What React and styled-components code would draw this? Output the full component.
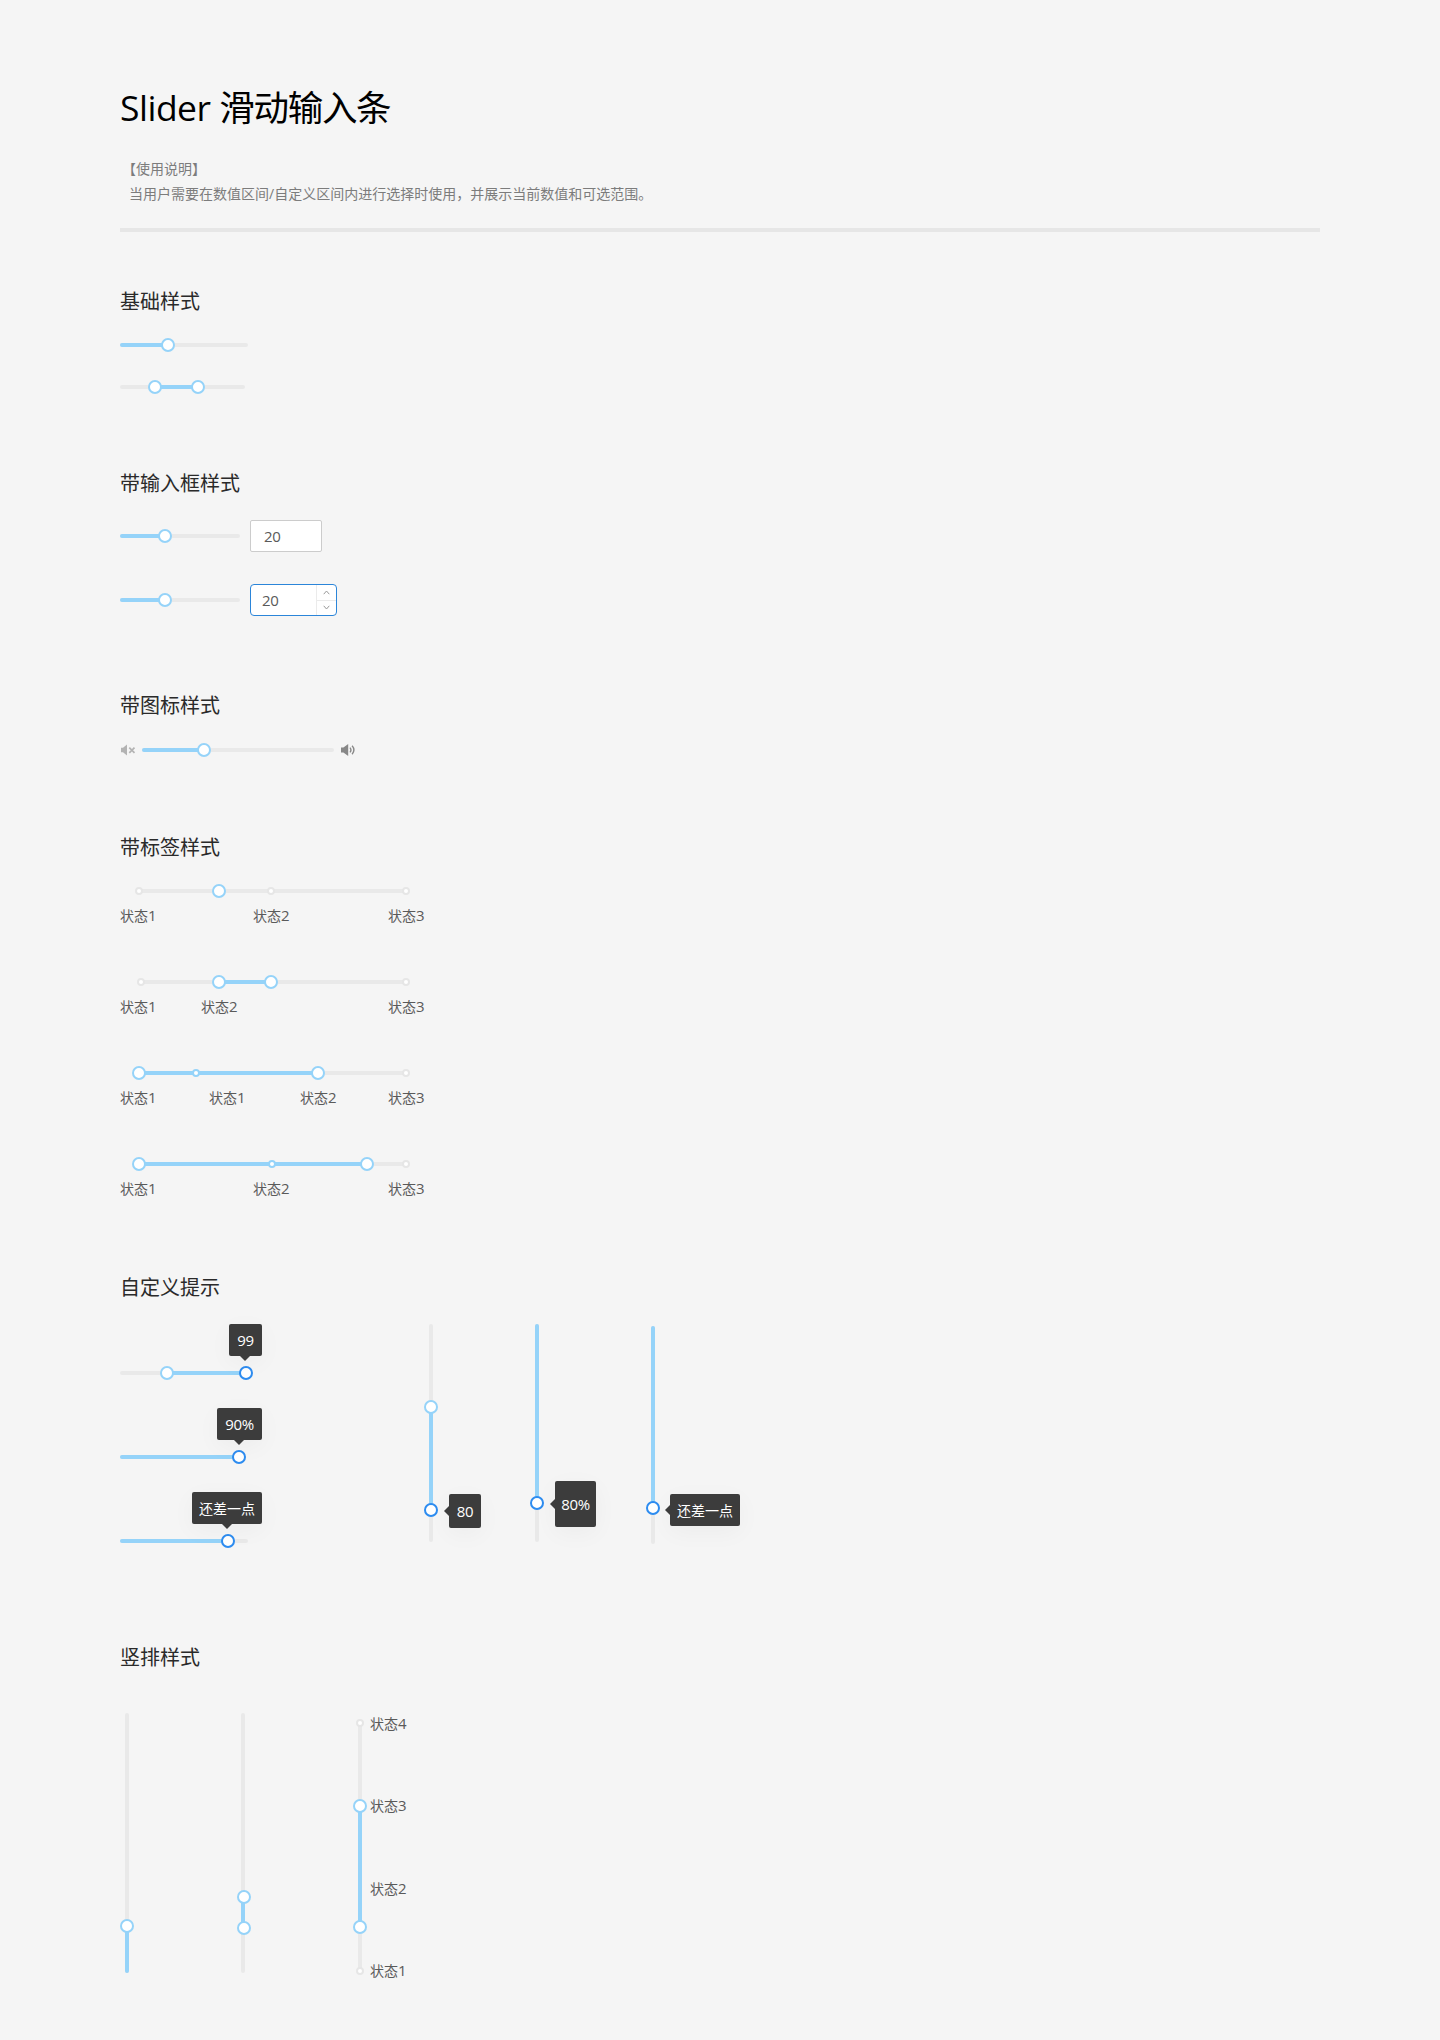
import React from "react";
import styled, { createGlobalStyle, css } from "styled-components";

const LIGHT = "#95d3f9";
const BLUE = "#2d8cf0";
const RAIL = "#e9e9e9";

const GlobalStyle = createGlobalStyle`
  * { box-sizing: border-box; }
  body {
    margin: 0;
    background: #f5f5f5;
    font-family: "Open Sans", "Noto Sans CJK SC", sans-serif;
    font-weight: 400;
    color: #2a2a2a;
  }
`;

const Page = styled.main`
  width: 1440px;
  height: 2040px;
  padding: 83px 120px 0;
  overflow: hidden;
  background: #f5f5f5;
`;

const Title = styled.h1`
  margin: 0;
  font-size: 35.5px;
  font-weight: 400;
  line-height: 48px;
  color: #000;
  letter-spacing: -0.5px;
  white-space: nowrap;
`;

const TitleCjk = styled.span`
  letter-spacing: -1.3px;
`;

const Usage = styled.p`
  margin: 25px 0 22px;
  font-size: 14px;
  line-height: 25px;
  color: #7c7c7c;
  white-space: pre;
`;

const UsageLine = styled.span`
  display: block;
  padding-left: ${(p) => p.$indent}px;
`;

const Divider = styled.hr`
  margin: 0;
  border: 0;
  height: 4px;
  background: #e6e6e6;
`;

const Section = styled.section`
  margin-top: ${(p) => p.$top}px;
`;

const Heading = styled.h2`
  margin: 0 0 ${(p) => p.$gap || 22}px;
  font-size: 20px;
  font-weight: 400;
  line-height: 28px;
`;

const Stack = styled.div`
  display: flex;
  flex-direction: column;
  align-items: flex-start;
  gap: ${(p) => p.$gap}px;
  padding-top: ${(p) => p.$top || 0}px;
`;

const Row = styled.div`
  display: flex;
  align-items: ${(p) => p.$align || "center"};
  gap: ${(p) => p.$gap || 0}px;
`;

const SliderBox = styled.div`
  position: relative;
  display: flex;
  flex: none;
  ${(p) =>
    p.$vertical
      ? css`
          width: 14px;
          height: ${p.$length}px;
          justify-content: center;
        `
      : css`
          height: 14px;
          width: ${p.$length}px;
          align-items: center;
        `}
`;

const Rail = styled.div`
  position: relative;
  border-radius: 2px;
  background: ${RAIL};
  ${(p) => (p.$vertical ? "width: 4px; height: 100%;" : "height: 4px; width: 100%;")}
`;

const Fill = styled.div`
  position: absolute;
  border-radius: 2px;
  background: ${LIGHT};
  ${(p) =>
    p.$vertical
      ? css`
          left: 0;
          width: 4px;
          top: ${p.$from}px;
          height: ${p.$to - p.$from}px;
        `
      : css`
          top: 0;
          height: 4px;
          left: ${p.$from}px;
          width: ${p.$to - p.$from}px;
        `}
`;

const Handle = styled.span`
  position: absolute;
  width: 14px;
  height: 14px;
  border: 2px solid ${(p) => (p.$active ? BLUE : LIGHT)};
  border-radius: 50%;
  background: #fff;
  ${(p) =>
    p.$vertical
      ? css`
          left: ${p.$shift || 0}px;
          top: ${p.$at - 7}px;
        `
      : css`
          top: 0;
          left: ${p.$at - 7}px;
        `}
`;

const Mark = styled.span`
  position: absolute;
  width: 8px;
  height: 8px;
  border: 2px solid ${(p) => (p.$on ? LIGHT : "#e6e6e6")};
  border-radius: 50%;
  background: #fff;
  ${(p) =>
    p.$vertical
      ? css`
          left: 3px;
          top: ${p.$at - 4}px;
        `
      : css`
          top: 3px;
          left: ${p.$at - 4}px;
        `}
`;

const Tip = styled.span`
  position: absolute;
  display: flex;
  align-items: center;
  justify-content: center;
  width: ${(p) => p.$w}px;
  height: ${(p) => p.$h || 32}px;
  border-radius: 2px;
  background: #3c3c3c;
  color: #fff;
  font-size: ${(p) => (p.$cjk ? 14 : 15)}px;
  letter-spacing: ${(p) => (p.$cjk ? 0 : -0.4)}px;
  line-height: 20px;
  padding-top: ${(p) => (p.$cjk ? 2 : 0)}px;
  white-space: nowrap;
  box-shadow: 0 6px 24px rgba(0, 0, 0, 0.04);
  left: ${(p) => p.$x}px;
  top: ${(p) => p.$y}px;

  &::after {
    content: "";
    position: absolute;
    border: 5.5px solid transparent;
    ${(p) =>
      p.$side
        ? css`
            right: 100%;
            top: ${p.$arrow - 5.5}px;
            border-left-width: 0;
            border-right-color: #3c3c3c;
          `
        : css`
            top: 100%;
            left: ${p.$arrow - 5.5}px;
            border-bottom-width: 0;
            border-top-color: #3c3c3c;
          `}
  }
`;

const Labels = styled.div`
  display: grid;
  grid-template-columns: ${(p) => p.$columns};
  margin-top: 8px;
`;

const LabelText = styled.span`
  font-size: 14px;
  line-height: 20px;
  height: 20px;
  color: #5a5a5a;
  white-space: nowrap;
`;

const Digit = styled.span`
  font-size: 15px;
  line-height: 1;
`;

const Labeled = styled.div`
  display: flex;
  flex-direction: column;
`;

const Inset = styled.div`
  padding-left: ${(p) => p.$left}px;
`;

const NumberBox = styled.div`
  display: flex;
  align-items: center;
  width: ${(p) => (p.$focused ? 87 : 72)}px;
  height: 32px;
  padding-left: ${(p) => (p.$focused ? 11 : 13)}px;
  border: 1px solid ${(p) => (p.$focused ? "#2b85d9" : "#ccc")};
  border-radius: ${(p) => (p.$focused ? 4 : 2)}px;
  background: #fff;
  font-size: 15px;
  letter-spacing: -0.4px;
  line-height: 20px;
  color: #5a5a5a;
`;

const Stepper = styled.div`
  display: flex;
  flex-direction: column;
  width: 20px;
  height: 30px;
  margin-left: auto;
  border-left: 1px solid #ebebeb;
`;

const Step = styled.span`
  display: flex;
  flex: 1;
  align-items: center;
  justify-content: center;
  & + & {
    border-top: 1px solid #ebebeb;
  }
`;

const Svg = styled.svg`
  display: block;
  flex: none;
`;

const Columns = styled.div`
  display: grid;
  grid-template-columns: ${(p) => p.$columns};
  align-items: start;
`;

const Scale = styled.div`
  display: flex;
  flex-direction: column;
  justify-content: space-between;
  height: 267px;
  margin: 1px 0 0 3px;
`;

function Label({ state }) {
  return (
    <LabelText>
      状态<Digit>{state}</Digit>
    </LabelText>
  );
}

function Slider({ length, vertical, fill, handles = [], marks = [], children }) {
  return (
    <SliderBox $length={length} $vertical={vertical}>
      <Rail $vertical={vertical}>
        {fill && <Fill $vertical={vertical} $from={fill[0]} $to={fill[1]} />}
      </Rail>
      {marks.map((m) => (
        <Mark key={m.at} $at={m.at} $on={m.on} $vertical={vertical} />
      ))}
      {handles.map((h) => (
        <Handle key={h.at} $at={h.at} $active={h.active} $shift={h.shift} $vertical={vertical} />
      ))}
      {children}
    </SliderBox>
  );
}

function LabeledSlider({ inset, length, fill, handles, marks, columns, states }) {
  return (
    <Labeled>
      <Inset $left={inset}>
        <Slider length={length} fill={fill} handles={handles} marks={marks} />
      </Inset>
      <Labels $columns={columns}>
        {states.map((state, i) => (
          <Label key={i} state={state} />
        ))}
      </Labels>
    </Labeled>
  );
}

function Chevron({ down }) {
  return (
    <Svg width="7" height="5" viewBox="0 0 7 5" fill="none" stroke="#999" strokeWidth="1">
      <path d={down ? "M0.7 0.8 3.5 4 6.3 0.8" : "M0.7 4.2 3.5 1 6.3 4.2"} />
    </Svg>
  );
}

function MutedIcon() {
  return (
    <Svg width="16" height="14" viewBox="0 0 16 14" fill="none">
      <path d="M1 4.8H3L7 1.6V12.4L3 9.2H1Z" fill="#b3b3b3" />
      <path d="M9.3 4.6 14.5 9.8M14.5 4.6 9.3 9.8" stroke="#b3b3b3" strokeWidth="1.7" />
    </Svg>
  );
}

function VolumeIcon() {
  return (
    <Svg width="16" height="14" viewBox="0 0 16 14" fill="none">
      <path d="M1 4.5H3.4L8.2 1V13L3.4 9.5H1Z" fill="#888" />
      <path d="M10 4.6Q11.9 7 10 9.4M12.1 2.8Q15.7 7 12.1 11.2" stroke="#888" strokeWidth="1.4" />
    </Svg>
  );
}

export default function App() {
  return (
    <Page>
      <GlobalStyle />
      <Title>
        Slider <TitleCjk>滑动输入条</TitleCjk>
      </Title>
      <Usage>
        <UsageLine $indent={2}>【使用说明】</UsageLine>
        <UsageLine $indent={9}>
          当用户需要在数值区间/自定义区间内进行选择时使用，并展示当前数值和可选范围。
        </UsageLine>
      </Usage>
      <Divider />

      <Section $top={56}>
        <Heading>基础样式</Heading>
        <Stack $gap={28}>
          <Slider length={128} fill={[0, 48]} handles={[{ at: 48 }]} />
          <Slider length={125} fill={[35, 78]} handles={[{ at: 35 }, { at: 78 }]} />
        </Stack>
      </Section>

      <Section $top={76}>
        <Heading>带输入框样式</Heading>
        <Stack $gap={32}>
          <Row $gap={10}>
            <Slider length={120} fill={[0, 45]} handles={[{ at: 45 }]} />
            <NumberBox>20</NumberBox>
          </Row>
          <Row $gap={10}>
            <Slider length={120} fill={[0, 45]} handles={[{ at: 45 }]} />
            <NumberBox $focused>
              20
              <Stepper>
                <Step><Chevron /></Step>
                <Step><Chevron down /></Step>
              </Stepper>
            </NumberBox>
          </Row>
        </Stack>
      </Section>

      <Section $top={76}>
        <Heading $gap={23}>带图标样式</Heading>
        <Row $gap={6}>
          <MutedIcon />
          <Slider length={192} fill={[0, 62]} handles={[{ at: 62 }]} />
          <VolumeIcon />
        </Row>
      </Section>

      <Section $top={77}>
        <Heading>带标签样式</Heading>
        <Stack $gap={49}>
          <LabeledSlider
            inset={19}
            length={267}
            handles={[{ at: 80 }]}
            marks={[{ at: 0 }, { at: 132 }, { at: 267 }]}
            columns="133px 135px auto"
            states={[1, 2, 3]}
          />
          <LabeledSlider
            inset={21}
            length={265}
            fill={[78, 130]}
            handles={[{ at: 78 }, { at: 130 }]}
            marks={[{ at: 0 }, { at: 265 }]}
            columns="81px 187px auto"
            states={[1, 2, 3]}
          />
          <LabeledSlider
            inset={19}
            length={267}
            fill={[0, 179]}
            handles={[{ at: 0 }, { at: 179 }]}
            marks={[{ at: 57, on: true }, { at: 267 }]}
            columns="89px 91px 88px auto"
            states={[1, 1, 2, 3]}
          />
          <LabeledSlider
            inset={19}
            length={267}
            fill={[0, 228]}
            handles={[{ at: 0 }, { at: 228 }]}
            marks={[{ at: 133, on: true }, { at: 267 }]}
            columns="133px 135px auto"
            states={[1, 2, 3]}
          />
        </Stack>
      </Section>

      <Section $top={75}>
        <Heading>自定义提示</Heading>
        <Columns $columns="304px 106px 116px auto">
          <Stack $gap={70} $top={42}>
            <Slider length={128} fill={[47, 126]} handles={[{ at: 47 }, { at: 126, active: true }]}>
              <Tip $x={109} $y={-42} $w={33} $arrow={16.5}>99</Tip>
            </Slider>
            <Slider length={120} fill={[0, 119]} handles={[{ at: 119, active: true }]}>
              <Tip $x={97} $y={-42} $w={45} $arrow={22.5}>90%</Tip>
            </Slider>
            <Slider length={128} fill={[0, 108]} handles={[{ at: 108, active: true }]}>
              <Tip $cjk $x={72} $y={-42} $w={70} $arrow={35.5}>还差一点</Tip>
            </Slider>
          </Stack>
          <Slider vertical length={218} fill={[83, 186]} handles={[{ at: 83 }, { at: 186, active: true }]}>
            <Tip $side $x={25} $y={170} $w={32} $h={34} $arrow={17}>80</Tip>
          </Slider>
          <Slider vertical length={218} fill={[0, 179]} handles={[{ at: 179, active: true }]}>
            <Tip $side $x={25} $y={157} $w={41} $h={46} $arrow={23}>80%</Tip>
          </Slider>
          <Stack $top={2}>
            <Slider vertical length={218} fill={[0, 182]} handles={[{ at: 182, active: true }]}>
              <Tip $cjk $side $x={24} $y={168} $w={70} $arrow={16}>还差一点</Tip>
            </Slider>
          </Stack>
        </Columns>
      </Section>

      <Section $top={96}>
        <Heading $gap={41}>竖排样式</Heading>
        <Columns $columns="116px 117px auto">
          <Slider vertical length={260} fill={[213, 260]} handles={[{ at: 213 }]} />
          <Slider
            vertical
            length={260}
            fill={[184, 215]}
            handles={[{ at: 184, shift: 1 }, { at: 215, shift: 1 }]}
          />
          <Row $align="flex-start">
            <Stack $top={10}>
              <Slider
                vertical
                length={248}
                fill={[83, 204]}
                handles={[{ at: 83 }, { at: 204 }]}
                marks={[{ at: 0 }, { at: 248 }]}
              />
            </Stack>
            <Scale>
              <Label state={4} />
              <Label state={3} />
              <Label state={2} />
              <Label state={1} />
            </Scale>
          </Row>
        </Columns>
      </Section>
    </Page>
  );
}
